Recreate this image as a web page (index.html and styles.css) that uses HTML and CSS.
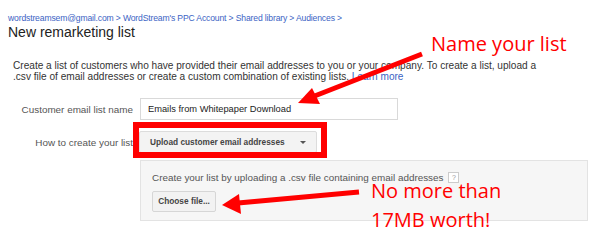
FILE: index.html
```html
<!DOCTYPE html>
<html>
	<head>
		<meta charset="UTF-8">
		<title>New remarketing list</title>
		<link rel="stylesheet" href="styles.css">
	</head>
	<body>
		<div id="page">
			<div class="crumbs">
				<a href="javascript:;">wordstreamsem@gmail.com</a> &gt;
				<a href="javascript:;">WordStream's PPC Account</a> &gt;
				<a href="javascript:;">Shared library</a> &gt;
				<a href="javascript:;">Audiences</a> &gt;
			</div>
			<h1 class="title">New remarketing list</h1>
			<p class="intro">
				Create a list of customers who have provided their email addresses to you or your company. To create a list, upload a<br>
				.csv file of email addresses or create a custom combination of existing lists. <a href="javascript:;">Learn more</a>
			</p>
			<div class="row row-name">
				<label class="label">Customer email list name</label>
				<div class="input">Emails from Whitepaper Download</div>
			</div>
			<div class="row row-how">
				<label class="label">How to create your list</label>
				<div class="select">
					<span>Upload customer email addresses</span>
					<span class="caret"></span>
				</div>
			</div>
			<div class="panel">
				<div class="panel-text">
					Create your list by uploading a .csv file containing email addresses
					<span class="help">?</span>
				</div>
				<div class="btn">Choose file...</div>
			</div>

			<!-- annotations drawn over the screenshot -->
			<svg class="marks" width="598" height="243" viewBox="0 0 598 243">
				<rect x="136" y="125" width="188" height="30" fill="none" stroke="#f00" stroke-width="6"/>
				<line x1="422" y1="54" x2="312" y2="97" stroke="#f00" stroke-width="5"/>
				<polygon points="298,103 312,88 320,104" fill="#f00"/>
				<line x1="359" y1="192" x2="238" y2="203" stroke="#f00" stroke-width="5"/>
				<polygon points="222,205 239,194 241,214" fill="#f00"/>
			</svg>
			<div class="note note-name">Name your list</div>
			<div class="note note-size">
				<div class="note-line">No more than</div>
				<div class="note-line">17MB worth!</div>
			</div>
		</div>
	</body>
</html>
```

FILE: styles.css
```css
body{
    margin: 0;
    background: #fff;
    font-family: Arial, "Liberation Sans", sans-serif;
    color: #333;
}
a{
    color: #3b63c4;
    text-decoration: none;
}
#page{
    position: relative;
    width: 598px;
    height: 243px;
    overflow: hidden;
}
.crumbs{
    padding: 12px 0 0 8px;
    font-size: 8.6px;
    line-height: 12px;
    color: #3b63c4;
    letter-spacing: -0.15px;
}
.title{
    margin: 0 0 0 8px;
    font-size: 14px;
    font-weight: normal;
    line-height: 16px;
    color: #222;
}
.intro{
    margin: 20px 0 0 13px;
    font-size: 10.1px;
    line-height: 11px;
    color: #333;
    white-space: nowrap;
}
.row{
    display: flex;
    align-items: center;
}
.row-name{
    margin-top: 16px;
}
.row-how{
    margin-top: 11px;
}
.label{
    width: 134px;
    padding-right: 1px;
    box-sizing: border-box;
    text-align: right;
    font-size: 9.9px;
    color: #555;
    white-space: nowrap;
}
.row-name .label{
    margin-right: 6px;
}
.row-how .label{
    margin-right: 5px;
}
.input{
    width: 258px;
    height: 22px;
    border: 1px solid #d9d9d9;
    box-sizing: border-box;
    padding-left: 7px;
    font-size: 9.3px;
    line-height: 20px;
    color: #222;
}
.select{
    display: flex;
    align-items: center;
    justify-content: space-between;
    width: 178px;
    height: 22px;
    box-sizing: border-box;
    padding: 0 10px 0 10px;
    border: 1px solid #dcdcdc;
    border-radius: 2px;
    background: #f3f3f3;
    font-size: 8.3px;
    font-weight: bold;
    color: #444;
    white-space: nowrap;
}
.caret{
    width: 0;
    height: 0;
    border-left: 3px solid transparent;
    border-right: 3px solid transparent;
    border-top: 3px solid #555;
}
.panel{
    margin: 7px 0 0 140px;
    width: 448px;
    height: 61px;
    box-sizing: border-box;
    padding: 11px 0 0 11px;
    border: 1px solid #e3e3e3;
    background: #f6f6f6;
}
.panel-text{
    display: flex;
    align-items: center;
    gap: 5px;
    font-size: 9.9px;
    line-height: 11px;
    color: #555;
    white-space: nowrap;
}
.help{
    display: inline-block;
    width: 9px;
    height: 9px;
    border: 1px solid #ccc;
    background: #fff;
    font-size: 7px;
    line-height: 9px;
    text-align: center;
    color: #999;
}
.btn{
    margin-top: 8px;
    width: 64px;
    height: 21px;
    box-sizing: border-box;
    border: 1px solid #d6d6d6;
    border-radius: 2px;
    background: #f2f2f2;
    font-size: 8.3px;
    font-weight: bold;
    line-height: 19px;
    text-align: center;
    color: #444;
    white-space: nowrap;
}
.marks{
    position: absolute;
    left: 0;
    top: 0;
}
.note{
    position: absolute;
    font-family: "Open Sans", sans-serif;
    color: #f00;
}
.note-name{
    left: 431px;
    top: 31px;
    font-size: 20px;
    line-height: 26px;
}
.note-size{
    left: 371px;
    top: 183px;
    font-size: 20px;
    line-height: 16px;
}
.note-line + .note-line{
    margin-top: 13px;
}
```
